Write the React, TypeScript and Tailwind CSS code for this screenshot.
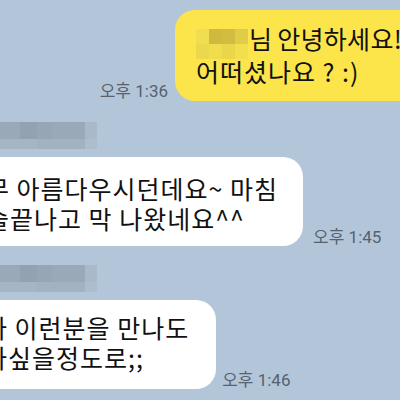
import React from 'react'

const bg = 'bg-[#b3c6d9]'

const NameBlur = () => (
  <div className="flex flex-col w-[97px]">
    <div className="flex h-[17px]">
      <div className="w-[20px] bg-[#9aa9b8]" />
      <div className="w-[17px] bg-[#93a2b1]" />
      <div className="w-[15px] bg-[#97a6b5]" />
      <div className="w-[33px] bg-[#9aa9b8]" />
      <div className="w-[12px] bg-[#a9b9c9]" />
    </div>
    <div className="flex h-[10px]">
      <div className="w-[37px] bg-[#a6b5c5]" />
      <div className="w-[48px] bg-[#a3b2c2]" />
      <div className="w-[12px] bg-[#adbdce]" />
    </div>
  </div>
)

const Time = ({ children, className }: { children: React.ReactNode; className?: string }) => (
  <span
    className={`shrink-0 text-[17px] leading-[18px] text-[#56626f] font-['Roboto','Noto_Sans_CJK_KR',sans-serif] whitespace-nowrap ${className ?? ''}`}
  >
    {children}
  </span>
)

export default function App() {
  return (
    <div
      className={`w-[400px] h-[400px] overflow-hidden ${bg} flex flex-col font-['Noto_Sans_CJK_KR',sans-serif] text-[#111]`}
    >
      {/* my message */}
      <div className="flex items-end justify-end pt-[10px]">
        <Time className="mr-[7px] mb-[1px]">오후 1:36</Time>
        <div className="shrink-0 w-[260px] -mr-[35px] bg-[#fbe54b] rounded-[20px] pl-[21px] pt-[12px] pb-[13px] text-[25px] leading-[33px] tracking-[1px] whitespace-nowrap">
          <div className="flex items-center h-[33px]">
            <div className="flex flex-col translate-y-[5px] mr-[1px]">
              <div className="flex h-[15px]">
                <div className="w-[13px] bg-[#f1dd52]" />
                <div className="w-[13px] bg-[#cfba3d]" />
                <div className="w-[13px] bg-[#d2bd41]" />
                <div className="w-[13px] bg-[#e0cc47]" />
              </div>
              <div className="flex h-[15px]">
                <div className="w-[13px] bg-[#ebd84b]" />
                <div className="w-[13px] bg-[#f0dc4c]" />
                <div className="w-[13px] bg-[#e9d649]" />
                <div className="w-[13px] bg-[#f3df4d]" />
              </div>
            </div>
            <span className="tracking-[0.3px] [word-spacing:-1px]">님 안녕하세요!</span>
          </div>
          <div>어떠셨나요 ? :)</div>
        </div>
      </div>

      {/* reply 1 */}
      <div className="mt-[21px]">
        <NameBlur />
      </div>
      <div className="flex items-end mt-[8px]">
        <div className="shrink-0 -ml-[52px] bg-white rounded-[20px] pl-[14px] pr-[25px] pt-[16px] pb-[13px] text-[25px] leading-[30px] tracking-[1px] whitespace-nowrap">
          <div>너무 아름다우시던데요~ 마침</div>
          <div>수술끝나고 막 나왔네요^^</div>
        </div>
        <Time className="ml-[10px] mb-[0px]">오후 1:45</Time>
      </div>

      {/* reply 2 */}
      <div className="mt-[19px]">
        <NameBlur />
      </div>
      <div className="flex items-end mt-[8px]">
        <div className="shrink-0 -ml-[30px] bg-white rounded-[20px] pl-[14px] pr-[27px] pt-[12px] pb-[17px] text-[25px] leading-[30px] tracking-[1px] whitespace-nowrap">
          <div>가 이런분을 만나도</div>
          <div>사싶을정도로;;</div>
        </div>
        <Time className="ml-[6px] mb-[0px]">오후 1:46</Time>
      </div>
    </div>
  )
}
